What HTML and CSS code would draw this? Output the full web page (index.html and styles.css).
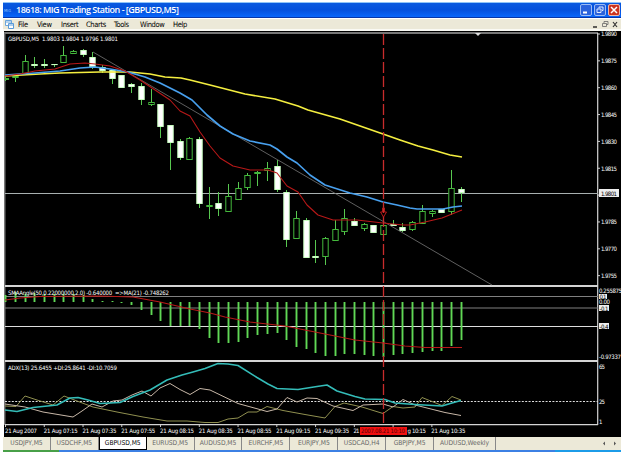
FILE: index.html
```html
<!DOCTYPE html>
<html lang="en">
<head>
    <meta charset="UTF-8">
    <meta name="viewport" content="width=device-width, initial-scale=1.0">
    <title>18618: MIG Trading Station - [GBPUSD,M5]</title>
    <link rel="stylesheet" href="styles.css">
</head>
<body>
    <div class="window">
        <div class="title-bar">
            <span class="app-logo">MIG</span>
            <span class="title">18618: MIG Trading Station - [GBPUSD,M5]</span>
            <div class="window-buttons">
                <span class="win-btn"><svg width="12" height="12"><path d="M3 8.5h4" stroke="#fff" stroke-width="2"/></svg></span>
                <span class="win-btn"><svg width="12" height="12"><path d="M5 4.500V3h4v3.500H8M3 5h4v3.500h-4z" fill="none" stroke="#dfeaff"/></svg></span>
                <span class="win-btn close"><svg width="12" height="12"><path d="M3 3l6 6M9 3l-6 6" stroke="#fff" stroke-width="1.500"/></svg></span>
            </div>
        </div>

        <div class="menu-bar">
            <svg class="menu-icon" width="10" height="9"><path d="M.5.500h6v5h-6zM.5 2h6" fill="#fff" stroke="#6aa5dc"/><path d="M3.500 3.500h5v5h-5zM3.500 5h5" fill="#fff" stroke="#5b9bd8"/></svg>
            <span class="menu-item file">File</span>
            <span class="menu-item view">View</span>
            <span class="menu-item insert">Insert</span>
            <span class="menu-item charts">Charts</span>
            <span class="menu-item tools">Tools</span>
            <span class="menu-item wnd">Window</span>
            <span class="menu-item">Help</span>
            <svg class="mdi-buttons" width="30" height="9">
                <path d="M5 7h4" stroke="#222" stroke-width="1.400"/>
                <path d="M16 3V1.500h4v3h-1.500M14.500 3.500h4v3h-4z" fill="none" stroke="#666" stroke-width=".8"/>
                <path d="M25 2l4 5M29 2l-4 5" stroke="#333" stroke-width="1.200"/>
            </svg>
        </div>

        <svg class="chart" id="chart" width="617" height="406" viewBox="4 31 617 406">
            <!-- frame and panel separators -->
            <path class="frame-gray" d="M4 33h594M4.500 32v393"/>
            <path class="frame-light" d="M5 286h593M5 361h593"/>
            <path class="frame-light thin" d="M5 424.700h593M597.700 33v392"/>
            <path d="M475 33h6l-3 3z" fill="#ddd"/>

            <!-- levels -->
            <path class="level" d="M5 193.500h593"/>
            <path class="level dim" d="M5 296.500h593M5 308h593"/>
            <path class="level bright" d="M5 326.500h593"/>
            <path class="level dashed" d="M5 401.500h593"/>

            <g id="histogram"></g>
            <g id="candles"></g>

            <!-- price averages -->
            <path class="trend" d="M93 52L492 285"/>
            <polyline class="ma yellow" points="5,76 40,74 60,73 100,72 130,72 150,74 165,77 181,78 190,80 210,85 245,94 275,99 298,106 308,110 340,119 383,134 400,140 418,146 433,150 450,155 462,157"/>
            <polyline class="ma blue" points="5,75 35,73 60,71 80,68 95,67 110,69 128,72 145,77 160,83 180,93 192,100 207,115 220,126 233,134 250,141 270,145 277,149 287,157 297,163 310,175 325,185 350,193 367,197 383,202 397,205 410,208 417,209 443,209 453,207 462,206"/>
            <polyline class="ma red" points="5,76 20,74 35,71 55,69 70,64 85,63 95,64 110,66 125,71 140,80 155,90 170,100 180,111 190,116 200,132 210,146 220,158 233,166 250,170 268,170 277,173 287,186 298,192 307,205 318,215 333,220 357,220 383,223 403,225 410,225 425,222 442,218 452,214 462,210"/>

            <!-- angle average -->
            <polyline class="ma red" points="5,300 20,298 40,296.500 100,296 133,297 160,302 190,309 210,313 225,317 250,322 285,326 305,330 325,334 355,340 383,343 405,346 425,347.500 462,347.500"/>

            <!-- ADX -->
            <polyline class="di minus" points="5,406 16,406.500 25,396 37,400 53,405 64,396 77,401 93,407 117,412 143,417 167,421 187,421 205,422.500 218,422.500 228,419 238,418 248,412 257,412 267,406.500 283,410.500 305,414.500 325,418 335,406.500 344,403 362,407 383,413.500 393,406.500 403,408 415,407 422,397.500 442,405.500 452,396.500 461,400"/>
            <polyline class="di plus" points="5,404 25,407 43,412 55,414 73,417 82,411 92,404 102,407 113,401 122,400 132,395 142,391 151,396 160,388 170,383.500 180,389.500 190,394.500 200,388.500 210,390 238,403.500 267,411.500 277,409 287,397.500 297,402 307,398 317,398.500 333,406 353,410.500 363,405 383,404 393,407 403,399.500 415,405 445,412.500 461,415.500"/>
            <polyline class="adx" points="5,410 17,411.500 33,407.500 57,405 70,398 78,397.500 88,400 100,403.500 120,402.500 133,396.500 150,390 167,380 182,375 193,372 205,368.500 218,363.500 228,364 238,365.500 257,377.500 268,384 277,388.500 298,389.500 317,386.500 327,385 337,391 355,396.500 365,399 385,399.500 395,403 415,404.500 442,406 452,403 461,400.500"/>

            <path class="marker" d="M383.500 34V425"/>
            <path class="sell" d="M380.500 212l3 5 3-5h-2v-4h-2v4z"/>

            <text class="label" x="8" y="40.500" textLength="110">GBPUSD,M5&#160; 1.9803 1.9804 1.9796 1.9801</text>
            <text class="label" x="8" y="295" textLength="161">SMAAngle(50,0.22000000,2.0) -0.640000&#160; =&gt;MA(21) -0.748262</text>
            <text class="label" x="8" y="370" textLength="109">ADX(13) 25.6455 +DI:25.8641 -DI:10.7059</text>

            <g id="price-scale"></g>
            <rect class="tag" x="599" y="189" width="20" height="8"/>
            <text class="label on-tag" x="601" y="195.500" textLength="16">1.9801</text>

            <text class="label" x="599" y="292.500" textLength="23">0.255875</text>
            <rect class="tag" x="599" y="294" width="8" height="5"/>
            <text class="label on-tag" x="599.500" y="298.700" textLength="7">0.1</text>
            <text class="label" x="599" y="304.300" textLength="11">0.00</text>
            <rect class="tag" x="599" y="305" width="10" height="6"/>
            <text class="label on-tag" x="599.500" y="310.500" textLength="9">-0.1</text>
            <rect class="tag" x="599" y="323" width="10" height="6"/>
            <text class="label on-tag" x="599.500" y="328.500" textLength="9">-0.4</text>
            <text class="label" x="599" y="358.500" textLength="22">-0.97337</text>
            <text class="label" x="599" y="368.500" textLength="6">65</text>
            <text class="label" x="599" y="403.500" textLength="6">25</text>
            <text class="label" x="599" y="423.500">1</text>

            <g id="time-scale"></g>
            <rect x="360" y="427" width="47" height="8" fill="#f01010"/>
            <text class="label cross-time" x="361" y="433.200" textLength="44">2007.08.21 10:10</text>
        </svg>

        <div class="tabs">
            <span class="tab">USDJPY,M5</span>
            <span class="tab">USDCHF,M5</span>
            <span class="tab active">GBPUSD,M5</span>
            <span class="tab">EURUSD,M5</span>
            <span class="tab">AUDUSD,M5</span>
            <span class="tab">EURCHF,M5</span>
            <span class="tab">EURJPY,M5</span>
            <span class="tab">USDCAD,H4</span>
            <span class="tab">GBPJPY,M5</span>
            <span class="tab wide">AUDUSD,Weekly</span>
            <svg class="tab-arrows" width="18" height="7"><path d="M4 1.500v4l-2-2zM13 1.500v4l2-2z" fill="#555"/></svg>
        </div>
    </div>
    <div class="taskbar">
        <span class="start"></span>
        <span class="tray"></span>
    </div>

    <script>
        const NS = 'http://www.w3.org/2000/svg';
        const barX = i => 5.7 + 9.69 * i;

        // high, low, body top, body bottom, filled
        const candles = [
            [76, 81, 78, 79, 0], [75, 82, 76, 77, 0], [55, 73, 61, 73, 0], [57, 68, 64, 66, 1],
            [59, 68, 64, 66, 1], [64, 67, 64, 65, 1], [46, 63, 55, 62, 0], [50, 54, 51, 53, 0],
            [49, 57, 50, 55, 1], [52, 69, 57, 67, 1], [65, 73, 67, 71, 1], [69, 84, 70, 79, 1],
            [75, 88, 75, 88, 1], [83, 93, 84, 87, 1], [83, 105, 86, 100, 1], [89, 106, 102, 104, 0],
            [104, 138, 104, 127, 1], [125, 170, 125, 143, 1], [139, 160, 141, 158, 1], [137, 160, 138, 159, 0],
            [137, 208, 139, 204, 1], [187, 219, 205, 206, 0], [192, 216, 203, 209, 1], [184, 212, 196, 211, 0],
            [182, 199, 188, 199, 0], [173, 190, 175, 187, 0], [171, 186, 172, 173, 0], [162, 181, 168, 170, 0],
            [160, 192, 166, 190, 1], [190, 247, 192, 240, 1], [211, 239, 218, 238, 0], [218, 258, 220, 258, 1],
            [240, 263, 256, 258, 1], [237, 265, 238, 256, 0], [220, 241, 229, 240, 0], [209, 235, 218, 231, 0],
            [218, 226, 221, 226, 1], [223, 231, 224, 228, 0], [225, 233, 225, 233, 1], [225, 235, 225, 234, 0],
            [220, 226, 224, 226, 1], [223, 232, 227, 231, 1], [221, 231, 222, 229, 0], [205, 224, 211, 223, 0],
            [210, 217, 211, 213, 0], [209, 213, 209, 213, 1], [170, 215, 188, 211, 0], [187, 202, 189, 193, 1]
        ];

        // far end of every bar, the zero line is at 302
        const angle = [295, 292, 294, 293, 294, 294, 294, 294, 295, 299, 301, 301, 303, 305, 310, 315,
            321, 326, 326, 326, 329, 338, 343, 343, 342, 338, 335, 334, 333, 340, 347, 349,
            353, 356, 356, 354, 354, 355, 356, 357, 355, 354, 353, 352, 351, 351, 346, 340];

        const times = ['2007', '07:15', '07:35', '07:55', '08:15', '08:35', '08:55', '09:15', '09:35', '', '', '10:35'];
        const prices = ['1.9890', '1.9875', '1.9860', '1.9845', '1.9830', '1.9815', '', '1.9785', '1.9770', '1.9755'];

        function add(parent, tag, attrs, text) {
            const el = document.createElementNS(NS, tag);
            for (const key in attrs) el.setAttribute(key, attrs[key]);
            if (text) el.textContent = text;
            document.getElementById(parent).appendChild(el);
        }

        candles.forEach(([high, low, top, bottom, filled], i) => {
            const x = Math.floor(barX(i)) + 0.5;
            add('candles', 'path', { class: 'wick', d: `M${x} ${high}V${top}M${x} ${bottom}V${low}` });
            add('candles', 'rect', {
                class: filled ? 'body filled' : 'body',
                x: x - (i ? 2.7 : 0), y: top + 0.5, width: i ? 5.4 : 3, height: Math.max(bottom - top - (filled ? 1 : 0), 0.1)
            });
        });

        angle.forEach((y, i) => {
            const x = Math.floor(barX(i)) + 0.5;
            add('histogram', 'path', { class: 'hist', d: `M${x} 302V${y}` });
        });

        times.forEach((time, i) => {
            const x = 5 + 38.76 * i;
            add('time-scale', 'path', { class: 'tick', d: `M${x + 0.5} 425v2` });
            if (time) add('time-scale', 'text', { class: 'label', x: x, y: 433.2, textLength: i ? 34 : 32 }, '21 Aug ' + time);
        });
        // labels cut by the crosshair time
        add('time-scale', 'text', { class: 'label', x: 353.5, y: 433.2, textLength: 6 }, '21');
        add('time-scale', 'text', { class: 'label', x: 407.5, y: 433.2, textLength: 18.5 }, 'g 10:15');

        prices.forEach((price, i) => {
            const y = 34 + 26.85 * i;
            add('price-scale', 'path', { class: 'tick', d: `M598 ${y}h2` });
            if (price) add('price-scale', 'text', { class: 'label', x: 601, y: y + 2.3, textLength: 16 }, price);
        });
    </script>
</body>
</html>
```
FILE: styles.css
```css
body {
    margin: 0;
    width: 625px;
    height: 452px;
    overflow: hidden;
    background: #fff;
    font-family: "DejaVu Sans Condensed", "Liberation Sans", sans-serif;
}

.window {
    width: 618px;
    margin-left: 3px;
    padding-top: 2px;
}

.title-bar {
    display: flex;
    align-items: center;
    height: 16px;
    box-sizing: border-box;
    border-top: 1px solid #8fc4f8;
    border-bottom: 1px solid #0636a8;
    background: linear-gradient(#0a5ae0, #0450dc 50%, #0866fb);
    color: #fff;
}

.app-logo {
    width: 13px;
    font-size: 4px;
    color: #8ec0ff;
    padding-left: 1px;
    box-sizing: border-box;
}

.title {
    font-family: "Open Sans", "Liberation Sans", sans-serif;
    font-size: 9px;
    font-weight: 600;
    letter-spacing: -0.5px;
    line-height: 14px;
    white-space: nowrap;
}

.window-buttons {
    display: flex;
    gap: 2px;
    margin-left: auto;
    padding-right: 1px;
}

.win-btn {
    width: 12px;
    height: 12px;
    box-sizing: border-box;
    border: 1px solid #9cbcf4;
    border-radius: 2px;
    background: #2a62dc;
}

.win-btn svg {
    display: block;
    margin: -1px;
}

.win-btn.close {
    background: #cc3420;
    border-color: #eeb8a8;
}

.menu-bar {
    display: flex;
    align-items: center;
    height: 13px;
    box-sizing: border-box;
    border-top: 1px solid #fff;
    border-bottom: 2px solid #fafaf4;
    background: #ece9d8;
    font-size: 7.5px;
    letter-spacing: -0.35px;
    color: #000;
}

.menu-icon {
    margin: 0 3px 0 2px;
}

.menu-item {
    width: 22px;
    white-space: nowrap;
}

.menu-item.file {
    width: 19px;
}

.menu-item.view {
    width: 24px;
}

.menu-item.insert {
    width: 25px;
}

.menu-item.charts {
    width: 28px;
}

.menu-item.tools {
    width: 26px;
}

.menu-item.wnd {
    width: 33px;
}

.mdi-buttons {
    margin-left: auto;
    margin-right: 3px;
}

.chart {
    display: block;
    width: 617px;
    height: 406px;
    margin-left: 1px;
    background: #000;
}

.frame-gray {
    fill: none;
    stroke: #777;
    stroke-width: 2;
}

.frame-light {
    fill: none;
    stroke: #d4d4d4;
    stroke-width: 2;
}

.frame-light.thin {
    stroke-width: 1.2;
}

.level {
    stroke: #a8b0b0;
}

.level.dim {
    stroke: #808080;
}

.level.bright {
    stroke: #ddd;
}

.level.dashed {
    stroke: #ddd;
    stroke-dasharray: 2 1.4;
}

.trend {
    stroke: #777;
    stroke-width: 0.8;
}

.ma,
.di,
.adx {
    fill: none;
    stroke-linejoin: round;
}

.ma.yellow {
    stroke: #f4ee40;
    stroke-width: 1.7;
}

.ma.blue {
    stroke: #48a0ee;
    stroke-width: 1.7;
}

.ma.red {
    stroke: #b81818;
    stroke-width: 1.1;
}

.di.minus {
    stroke: #909050;
}

.di.plus {
    stroke: #c8b8a8;
}

.adx {
    stroke: #34bcb8;
    stroke-width: 1.5;
}

.marker {
    stroke: #c82c2c;
    stroke-width: 1.3;
    stroke-dasharray: 11 3;
}

.sell {
    fill: none;
    stroke: #b01818;
}

.wick {
    stroke: #58c850;
}

.body {
    fill: #000;
    stroke: #44b83c;
}

.body.filled {
    fill: #fff;
    stroke: #c8ffc0;
}

.hist {
    stroke: #60d855;
    stroke-width: 1.9;
}

.tick {
    stroke: #ccc;
}

.tag {
    fill: #eee;
}

.label {
    fill: #fff;
    font-size: 6px;
}

.label.on-tag {
    fill: #000;
}

.label.cross-time {
    fill: #500;
}

.tabs {
    display: flex;
    align-items: stretch;
    height: 13px;
    background: #ece9d8;
    font-size: 6.7px;
    letter-spacing: -0.05px;
    color: #666;
}

.tab {
    width: 47.9px;
    line-height: 12px;
    text-align: center;
    border-right: 1px solid #888;
    box-sizing: border-box;
    white-space: nowrap;
}

.tab.active {
    background: #fff;
    color: #000;
    border: 1px solid #000;
    border-top: none;
}

.tab.wide {
    width: 62px;
}

.tab-arrows {
    margin: 3px 2px 0 auto;
}

.taskbar {
    display: flex;
    height: 2px;
    margin-left: 3px;
    width: 618px;
    background: #3c80e4;
}

.start {
    width: 56px;
    background: #48a048;
}

.tray {
    width: 66px;
    margin-left: auto;
    background: #1c9ce8;
}
```
